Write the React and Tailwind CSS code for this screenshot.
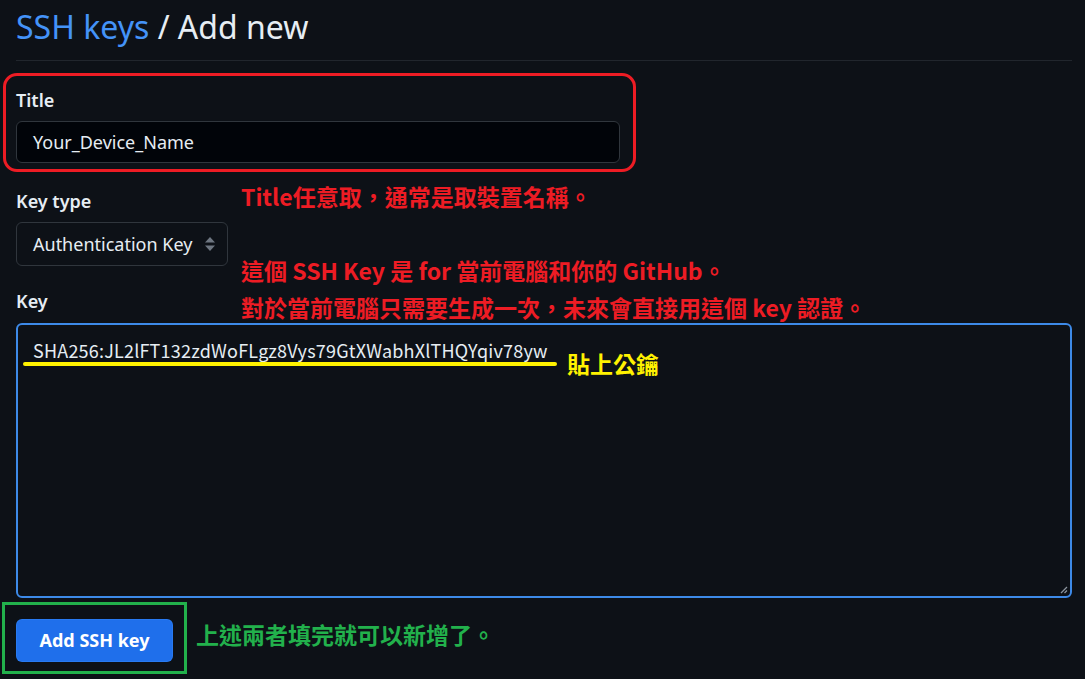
const ui = { fontFamily: '"Noto Sans", "Noto Sans CJK TC", sans-serif' };
const note = { fontFamily: '"Noto Sans CJK TC", sans-serif' };

function SelectArrows() {
  return (
    <svg width="12" height="16" viewBox="0 0 12 16" className="text-[#6e7681]">
      <path d="M6 1 L11 6.5 H1 Z" fill="currentColor" />
      <path d="M6 15 L11 9.5 H1 Z" fill="currentColor" />
    </svg>
  );
}

function ResizeGrip() {
  return (
    <svg width="10" height="10" viewBox="0 0 10 10" className="absolute right-[2px] bottom-[2px]">
      <path d="M9 3 L3 9 M9 6.5 L6.5 9" stroke="#8b949e" strokeWidth="1.3" />
    </svg>
  );
}

export default function App() {
  return (
    <div className="min-h-screen w-full bg-[#0d1117] pl-4 pr-[13px] text-[#e6edf3]" style={ui}>
      {/* Header */}
      <div className="h-[61px] border-b border-[#21262d]">
        <h2 className="text-[32px] leading-[54px] font-normal">
          <span className="text-[#4493f8]">SSH keys</span> / Add new
        </h2>
      </div>

      {/* Title (red annotation box) */}
      <div className="mt-3 -ml-[13px] w-[633px] h-[99px] border-[3px] border-[#ed1c24] rounded-[14px] pl-[10px] pt-[12px]">
        <label className="block text-[18px] leading-6 font-semibold">Title</label>
        <div className="mt-[9px] w-[604px] h-[42px] rounded-md border border-[#30363d] bg-[#010409] flex items-center px-4 text-[18px]">
          Your_Device_Name
        </div>
      </div>

      {/* Key type + notes */}
      <div className="flex">
        <div className="w-[212px] shrink-0 pt-[17px]">
          <label className="block text-[18px] leading-6 font-semibold">Key type</label>
          <div className="mt-[9px] h-[44px] rounded-md border border-[#30363d] bg-[#0d1117] flex items-center justify-between pl-4 pr-[11px] text-[18px]">
            <span>Authentication Key</span>
            <SelectArrows />
          </div>
          <label className="block mt-[23px] text-[18px] leading-6 font-semibold">Key</label>
        </div>
        <div className="ml-[13px] h-[141px] pt-[10px] text-[#ed1c24] font-bold text-[23px]" style={note}>
          <div className="leading-[28px]">Title任意取，通常是取裝置名稱。</div>
          <div className="mt-[46px] leading-[28px]">這個 SSH Key 是 for 當前電腦和你的 GitHub。</div>
          <div className="mt-[9px] leading-[28px]">對於當前電腦只需要生成一次，未來會直接用這個 key 認證。</div>
        </div>
      </div>

      {/* Key textarea */}
      <div className="relative mt-[10px] h-[275px] rounded-md border-2 border-[#3d8ae8] bg-[#0d1117] px-[15px] pt-[11px]">
        <div className="text-[18px] leading-[28px] tracking-[0.2px]" style={note}>
          SHA256:JL2lFT132zdWoFLgz8Vys79GtXWabhXlTHQYqiv78yw
        </div>
        <div className="absolute left-[5px] top-[37px] w-[534px] h-[4px] rounded-full bg-[#fff200]" />
        <div className="absolute left-[549px] top-[24px] text-[23px] leading-[28px] font-bold text-[#fff200]" style={note}>
          貼上公鑰
        </div>
        <ResizeGrip />
      </div>

      {/* Submit */}
      <div className="mt-1 flex items-center">
        <div className="-ml-[14px] w-[185px] h-[72px] border-[3px] border-[#22b14c] pl-[11px] pt-[14px]">
          <button className="h-[43px] w-[157px] rounded-md bg-[#1f6feb] border border-[#388bfd]/40 text-white text-[18px] font-bold">
            Add SSH key
          </button>
        </div>
        <div className="ml-[9px] -mt-[8px] text-[23px] font-bold text-[#22b14c]" style={note}>
          上述兩者填完就可以新增了。
        </div>
      </div>
    </div>
  );
}
